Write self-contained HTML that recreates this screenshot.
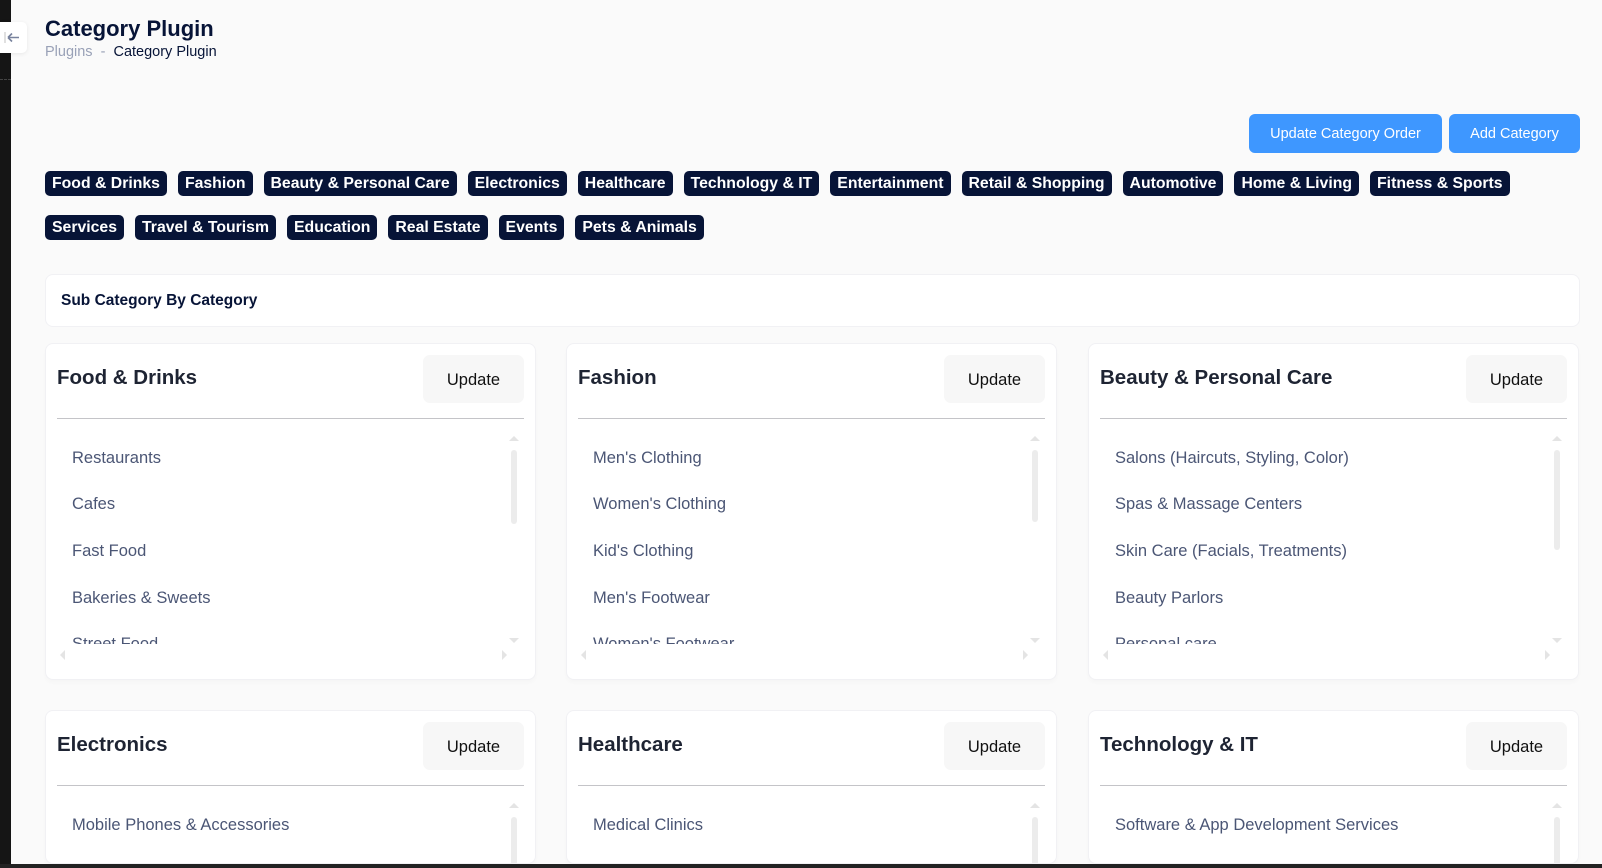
<!DOCTYPE html>
<html><head><meta charset="utf-8"><style>
*{box-sizing:border-box;margin:0;padding:0}
html{width:1602px;height:868px;overflow:hidden}
body{width:1602px;height:868px;overflow:hidden;background:#fafafa;font-family:"Liberation Sans",sans-serif;position:relative;color:#071437}
.strip{position:absolute;left:0;top:0;width:11px;height:864px;background:#151515;z-index:5}
.back{position:absolute;left:0;top:22px;width:27px;height:31px;background:#fff;border-radius:0 5px 5px 0;box-shadow:0 1px 4px rgba(0,0,0,.08);z-index:6}
.bottom{position:absolute;left:0;top:864px;width:1602px;height:4px;background:#222;z-index:5}
h1{position:absolute;left:45px;top:16px;font-size:22px;font-weight:600;color:#071437}
.bc{position:absolute;left:45px;top:44px;font-size:14.5px;color:#071437}
.bc span{color:#99a1b7}
.btn{position:absolute;top:114px;height:39px;background:#3e97ff;color:#fff;border-radius:6px;font-size:14.5px;display:flex;align-items:center;justify-content:center}
.chips{position:absolute;left:45px;width:1540px;white-space:nowrap}
.chip{display:inline-block;height:25px;line-height:25px;padding:0 7px;margin-right:11px;background:#071437;color:#fff;font-weight:700;font-size:15.8px;border-radius:5px;vertical-align:top}
.sub{position:absolute;left:45px;top:274px;width:1535px;height:53px;background:#fff;border:1px solid #f1f1f4;border-radius:8px;font-size:15.5px;font-weight:600;padding:17px 15px;color:#071437}
.card{position:absolute;width:491px;background:#fff;border:1px solid #f1f1f4;border-radius:8px;box-shadow:0 3px 4px rgba(0,0,0,.02);overflow:hidden}
.card h3{position:absolute;left:11px;top:22px;font-size:20.5px;font-weight:600;color:#1e2433}
.card .up{position:absolute;right:11px;top:11px;width:101px;height:48px;background:#f7f7f7;border-radius:7px;font-size:16.5px;color:#111;display:flex;align-items:center;justify-content:center;padding-top:3px}
.card .hr{position:absolute;left:11px;right:11px;top:74px;border-top:1px solid #c4c4c8}
.list{position:absolute;left:11px;right:11px;top:92px;height:208px;overflow:hidden}
.list.s{height:62px}
.list div{position:absolute;left:15px;font-size:16.5px;color:#4b5675}
.sb{position:absolute;right:7px;top:12px;width:6px;border-radius:3px;background:#ececec}
.tu,.td,.tl,.tr{position:absolute;width:0;height:0;border:5px solid transparent}
.tu{right:16px;top:92px;border-bottom-color:#e4e4e4;border-top:0}
.td{right:16px;top:294px;border-top-color:#e4e4e4;border-bottom:0}
.tl{left:14px;top:306px;border-right-color:#e4e4e4;border-left:0}
.tr{right:28px;top:306px;border-left-color:#e4e4e4;border-right:0}
</style></head><body>
<div class="strip"></div>
<div class="back"><svg width="27" height="31" viewBox="0 0 27 31"><path d="M5 10v11" stroke="#ccc" stroke-width="1.2"/><path d="M8 15.5h11M8 15.5l4-4M8 15.5l4 4" stroke="#78829d" stroke-width="1.6" fill="none"/></svg></div>
<div style="position:absolute;left:0;top:79px;width:11px;border-top:1px dashed #444;z-index:6"></div>
<h1>Category Plugin</h1>
<div class="bc"><span>Plugins</span> <span style="margin:0 4px">-</span> Category Plugin</div>
<div class="btn" style="left:1249px;width:193px">Update Category Order</div>
<div class="btn" style="left:1449px;width:131px">Add Category</div>
<div class="chips" style="top:171px"><span class="chip">Food &amp; Drinks</span><span class="chip">Fashion</span><span class="chip">Beauty &amp; Personal Care</span><span class="chip">Electronics</span><span class="chip">Healthcare</span><span class="chip">Technology &amp; IT</span><span class="chip">Entertainment</span><span class="chip">Retail &amp; Shopping</span><span class="chip">Automotive</span><span class="chip">Home &amp; Living</span><span class="chip">Fitness &amp; Sports</span></div>
<div class="chips" style="top:215px"><span class="chip">Services</span><span class="chip">Travel &amp; Tourism</span><span class="chip">Education</span><span class="chip">Real Estate</span><span class="chip">Events</span><span class="chip">Pets &amp; Animals</span></div>
<div class="sub">Sub Category By Category</div>

<div class="card" style="left:45px;top:343px;height:337px"><h3>Food &amp; Drinks</h3><div class="up">Update</div><div class="hr"></div>
<div class="list"><div style="top:13px">Restaurants</div><div style="top:59px">Cafes</div><div style="top:106px">Fast Food</div><div style="top:153px">Bakeries &amp; Sweets</div><div style="top:199px">Street Food</div><span class="sb" style="height:74px;top:14px"></span></div><i class="tu"></i><i class="td"></i><i class="tl"></i><i class="tr"></i></div>

<div class="card" style="left:566px;top:343px;height:337px"><h3>Fashion</h3><div class="up">Update</div><div class="hr"></div>
<div class="list"><div style="top:13px">Men's Clothing</div><div style="top:59px">Women's Clothing</div><div style="top:106px">Kid's Clothing</div><div style="top:153px">Men's Footwear</div><div style="top:199px">Women's Footwear</div><span class="sb" style="height:72px;top:14px"></span></div><i class="tu"></i><i class="td"></i><i class="tl"></i><i class="tr"></i></div>

<div class="card" style="left:1088px;top:343px;height:337px"><h3>Beauty &amp; Personal Care</h3><div class="up">Update</div><div class="hr"></div>
<div class="list"><div style="top:13px">Salons (Haircuts, Styling, Color)</div><div style="top:59px">Spas &amp; Massage Centers</div><div style="top:106px">Skin Care (Facials, Treatments)</div><div style="top:153px">Beauty Parlors</div><div style="top:199px">Personal care</div><span class="sb" style="height:100px;top:14px"></span></div><i class="tu"></i><i class="td"></i><i class="tl"></i><i class="tr"></i></div>

<div class="card" style="left:45px;top:710px;height:154px"><h3>Electronics</h3><div class="up">Update</div><div class="hr"></div>
<div class="list s"><div style="top:13px">Mobile Phones &amp; Accessories</div><div style="top:59px">Laptops &amp; Computers</div><span class="sb" style="height:60px;top:14px"></span></div><i class="tu"></i></div>
<div class="card" style="left:566px;top:710px;height:154px"><h3>Healthcare</h3><div class="up">Update</div><div class="hr"></div>
<div class="list s"><div style="top:13px">Medical Clinics</div><div style="top:59px">Dental Clinics</div><span class="sb" style="height:60px;top:14px"></span></div><i class="tu"></i></div>
<div class="card" style="left:1088px;top:710px;height:154px"><h3>Technology &amp; IT</h3><div class="up">Update</div><div class="hr"></div>
<div class="list s"><div style="top:13px">Software &amp; App Development Services</div><div style="top:59px">IT Support &amp; Consulting</div><span class="sb" style="height:60px;top:14px"></span></div><i class="tu"></i></div>
<div class="bottom"></div>
</body></html>
